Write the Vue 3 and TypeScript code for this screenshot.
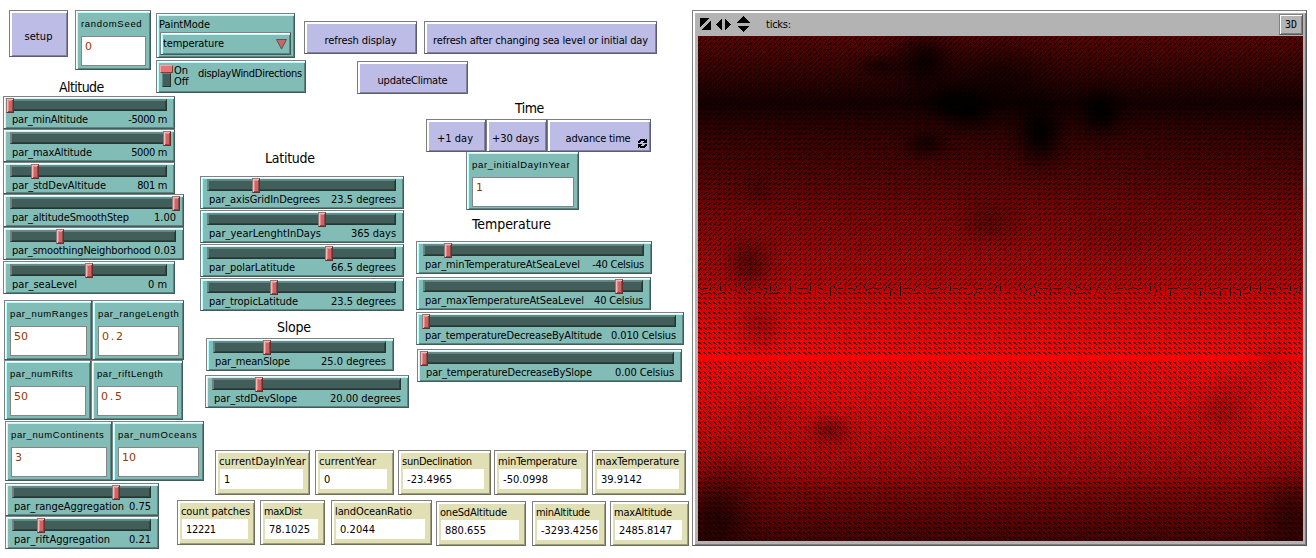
<script setup lang="ts">
import { onMounted, ref } from 'vue'

interface Slider { name: string; value: string; w: number; thumb: number; lw: number; vw: number; cls?: string }
interface Field { name: string; value: string; w: number; lw: number; vw: number }
interface Monitor { name: string; value: string; w: number; gap: number; lw: number; vw: number; low?: boolean }

// Spreads or tightens a text run so that it takes the given width.
const vFit = {
  mounted(el: HTMLElement, binding: { value: number }) {
    const n = (el.textContent ?? '').trim().length
    const natural = el.getBoundingClientRect().width
    if (n > 1) el.style.letterSpacing = `${((binding.value - natural) / (n - 0.5)).toFixed(3)}px`
  },
}

const altitude: Slider[] = [
  { name: 'par_minAltitude', value: '-5000 m', w: 172, thumb: 2, lw: 76, vw: 39 },
  { name: 'par_maxAltitude', value: '5000 m', w: 172, thumb: 159, lw: 80, vw: 36 },
  { name: 'par_stdDevAltitude', value: '801 m', w: 172, thumb: 27, lw: 94, vw: 30, cls: 'tight' },
  { name: 'par_altitudeSmoothStep', value: '1.00', w: 181, thumb: 168, lw: 117, vw: 22 },
  { name: 'par_smoothingNeighborhood', value: '0.03', w: 181, thumb: 52, lw: 139, vw: 22, cls: 'loose' },
  { name: 'par_seaLevel', value: '0 m', w: 172, thumb: 81, lw: 65, vw: 19 },
]
const latitude: Slider[] = [
  { name: 'par_axisGridInDegrees', value: '23.5 degrees', w: 204, thumb: 51, lw: 111, vw: 65 },
  { name: 'par_yearLenghtInDays', value: '365 days', w: 204, thumb: 117, lw: 112, vw: 45 },
  { name: 'par_polarLatitude', value: '66.5 degrees', w: 204, thumb: 124, lw: 86, vw: 65 },
  { name: 'par_tropicLatitude', value: '23.5 degrees', w: 204, thumb: 69, lw: 89, vw: 65 },
]
const slope: Slider[] = [
  { name: 'par_meanSlope', value: '25.0 degrees', w: 188, thumb: 56, lw: 75, vw: 65, cls: 'mean' },
  { name: 'par_stdDevSlope', value: '20.00 degrees', w: 204, thumb: 49, lw: 83, vw: 71, cls: 'dev' },
]
const temperature: Slider[] = [
  { name: 'par_minTemperatureAtSeaLevel', value: '-40 Celsius', w: 236, thumb: 27, lw: 155, vw: 52, cls: 't1' },
  { name: 'par_maxTemperatureAtSeaLevel', value: '40 Celsius', w: 235, thumb: 198, lw: 159, vw: 49, cls: 't2' },
  { name: 'par_temperatureDecreaseByAltitude', value: '0.010 Celsius', w: 268, thumb: 5, lw: 177, vw: 65, cls: 't3' },
  { name: 'par_temperatureDecreaseBySlope', value: '0.00 Celsius', w: 265, thumb: 2, lw: 166, vw: 59, cls: 't4' },
]
const aggregation: Slider[] = [
  { name: 'par_rangeAggregation', value: '0.75', w: 154, thumb: 106, lw: 110, vw: 22 },
  { name: 'par_riftAggregation', value: '0.21', w: 154, thumb: 31, lw: 96, vw: 22 },
]
const fieldRows: Field[][] = [
  [
    { name: 'par_numRanges', value: '50', w: 88, lw: 78, vw: 14 },
    { name: 'par_rangeLength', value: '0.2', w: 92, lw: 81, vw: 22 },
  ],
  [
    { name: 'par_numRifts', value: '50', w: 87, lw: 63, vw: 14 },
    { name: 'par_riftLength', value: '0.5', w: 92, lw: 66, vw: 22 },
  ],
  [
    { name: 'par_numContinents', value: '3', w: 107, lw: 93, vw: 7 },
    { name: 'par_numOceans', value: '10', w: 92, lw: 79, vw: 14 },
  ],
]
const monitorsTop: Monitor[] = [
  { name: 'currentDayInYear', value: '1', w: 95, gap: 38, lw: 87, vw: 6 },
  { name: 'currentYear', value: '0', w: 79, gap: 5, lw: 57, vw: 6 },
  { name: 'sunDeclination', value: '-23.4965', w: 93, gap: 4, lw: 70, vw: 45 },
  { name: 'minTemperature', value: '-50.0998', w: 94, gap: 3, lw: 79, vw: 45 },
  { name: 'maxTemperature', value: '39.9142', w: 94, gap: 4, lw: 83, vw: 41 },
]
const monitorsBottom: Monitor[] = [
  { name: 'count patches', value: '12221', w: 78, gap: 0, lw: 69, vw: 30 },
  { name: 'maxDist', value: '78.1025', w: 65, gap: 5, lw: 38, vw: 41 },
  { name: 'landOceanRatio', value: '0.2044', w: 101, gap: 6, lw: 77, vw: 35 },
  { name: 'oneSdAltitude', value: '880.655', w: 90, gap: 4, lw: 67, vw: 41, low: true },
  { name: 'minAltitude', value: '-3293.4256', w: 74, gap: 6, lw: 54, vw: 57, low: true },
  { name: 'maxAltitude', value: '2485.8147', w: 79, gap: 4, lw: 58, vw: 53, low: true },
]

const world = ref<HTMLCanvasElement | null>(null)
const COLS = 121
const ROWS = 101
const P = 5

// Red level by height in the world, in pixels from its top.
const levels: [number, number][] = [
  [0, 92], [25, 68], [50, 42], [68, 22], [74, 30], [100, 56], [140, 84], [164, 110],
  [185, 132], [220, 162], [252, 190], [260, 208], [290, 230], [316, 255], [324, 255],
  [360, 236], [395, 208], [425, 178], [440, 160], [455, 128], [480, 98], [505, 70],
]
// Cold spots: centre, radii, strength.
const spots: number[][] = [
  [226, 26, 32, 30, 0.75], [252, 66, 26, 16, 0.8], [270, 72, 26, 20, 0.92], [182, 30, 22, 12, 0.5],
  [228, 108, 22, 14, 0.6], [342, 96, 24, 34, 0.92], [402, 76, 22, 24, 0.95], [300, 44, 60, 42, 0.5],
  [59, 154, 14, 14, 0.22], [52, 228, 24, 26, 0.42], [62, 290, 22, 26, 0.24], [292, 186, 30, 22, 0.25],
  [132, 394, 20, 14, 0.35], [66, 374, 30, 28, 0.12], [18, 482, 36, 44, 0.55], [524, 374, 26, 22, 0.2],
  [576, 324, 26, 20, 0.15], [546, 350, 34, 20, 0.1], [592, 476, 34, 42, 0.42], [420, 200, 50, 30, 0.1],
  [40, 440, 40, 30, 0.15],
]

function levelAt(y: number): number {
  for (let i = 1; i < levels.length; i++) {
    const [y0, v0] = levels[i - 1]
    const [y1, v1] = levels[i]
    if (y <= y1) return v0 + ((v1 - v0) * (y - y0)) / (y1 - y0)
  }
  return levels[levels.length - 1][1]
}

onMounted(() => {
  const ctx = world.value?.getContext('2d')
  if (!ctx) return
  let seed = 7
  const rnd = () => (seed = (seed * 16807) % 2147483647) / 2147483647
  for (let r = 0; r < ROWS; r++) {
    for (let c = 0; c < COLS; c++) {
      const x = c * P + 2.5
      const y = r * P + 2.5
      let v = levelAt(y)
      for (const [cx, cy, rx, ry, s] of spots) {
        const d = ((x - cx) / rx) ** 2 + ((y - cy) / ry) ** 2
        v *= 1 - s * Math.exp(-d * 1.4)
      }
      v *= 0.97 + 0.05 * rnd()
      ctx.fillStyle = `rgb(${Math.min(255, Math.round(v))},0,0)`
      ctx.fillRect(c * P, r * P, P, P)
    }
  }
  // Each mark is a list of pixels: x, y, opacity.
  const steep = [[0, 4, 1], [1, 3, 1], [2, 2, 1], [3, 1, 1], [2, 3, 0.5]]
  const flat = [[0, 3, 1], [1, 3, 0.8], [1, 2, 0.5], [2, 2, 1], [3, 1, 1]]
  ctx.fillStyle = '#000'
  for (let r = 0; r < ROWS; r++) {
    if (r === 64) continue
    for (let c = 0; c < COLS; c++) {
      ctx.globalAlpha = 1
      if (r === 50 || (r === 51 && rnd() < 0.3)) {
        const a = rnd() * Math.PI
        for (let k = -2; k <= 2; k++) {
          ctx.fillRect(c * P + Math.round(2 + Math.cos(a) * k), r * P + Math.round(2 + Math.sin(a) * k), 1, 1)
        }
        continue
      }
      const shape = r < 14 || (r >= 36 && r < 50) || (r > 64 && r < 88) ? steep : flat
      const mirrored = r >= 51
      for (const [px, py, alpha] of shape) {
        ctx.globalAlpha = alpha
        ctx.fillRect(c * P + px, r * P + (mirrored ? 4 - py : py), 1, 1)
      }
    }
  }
})
</script>

<template>
  <div class="page">
    <main class="controls">
      <section class="top">
        <button class="btn setup"><span v-fit="28">setup</span></button>
        <div class="field teal seed">
          <label v-fit="61">randomSeed</label>
          <div class="entry">0</div>
        </div>
        <div class="modes">
          <div class="chooser teal">
            <span v-fit="51">PaintMode</span>
            <div class="choice teal">
              <span v-fit="61">temperature</span>
              <svg width="11" height="11" viewBox="0 0 11 11">
                <path d="M0.5 0.5H10.5L5.5 10Z" fill="#cc6666" stroke="#555" stroke-width="1" />
              </svg>
            </div>
          </div>
          <div class="switch teal">
            <div class="lever"><i class="knob"></i><i class="slot"></i></div>
            <div class="states"><span>On</span><span>Off</span></div>
            <span v-fit="104" class="switch-name">displayWindDirections</span>
          </div>
        </div>
        <div class="actions">
          <div class="action-row">
            <button class="btn refresh"><span v-fit="72">refresh display</span></button>
            <button class="btn refresh-all"><span v-fit="215">refresh after changing sea level or initial day</span></button>
          </div>
          <button class="btn update"><span v-fit="70">updateClimate</span></button>
        </div>
      </section>

      <div class="body">
        <section class="left">
          <h2 class="h-alt"><span v-fit="45">Altitude</span></h2>
          <div v-for="s in altitude" :key="s.name" class="slider teal" :class="s.cls" :style="{ width: s.w + 'px' }">
            <div class="track"></div>
            <i class="thumb" :style="{ left: s.thumb + 'px' }"></i>
            <div class="caption"><span v-fit="s.lw">{{ s.name }}</span><span v-fit="s.vw">{{ s.value }}</span></div>
          </div>
          <div class="fields">
            <div v-for="(row, i) in fieldRows" :key="i" class="field-row" :class="'fr' + i">
              <div v-for="f in row" :key="f.name" class="field teal" :style="{ width: f.w + 'px' }">
                <label v-fit="f.lw">{{ f.name }}</label>
                <div class="entry"><span v-fit="f.vw">{{ f.value }}</span></div>
              </div>
            </div>
          </div>
          <div class="aggregation">
            <div v-for="s in aggregation" :key="s.name" class="slider teal" :style="{ width: s.w + 'px' }">
              <div class="track"></div>
              <i class="thumb" :style="{ left: s.thumb + 'px' }"></i>
              <div class="caption"><span v-fit="s.lw">{{ s.name }}</span><span v-fit="s.vw">{{ s.value }}</span></div>
            </div>
          </div>
        </section>

        <div class="right">
          <div class="middle">
            <section class="lat">
              <h2 class="h-lat"><span v-fit="50">Latitude</span></h2>
              <div class="lat-list">
                <div v-for="s in latitude" :key="s.name" class="slider teal" :style="{ width: s.w + 'px' }">
                  <div class="track"></div>
                  <i class="thumb" :style="{ left: s.thumb + 'px' }"></i>
                  <div class="caption"><span v-fit="s.lw">{{ s.name }}</span><span v-fit="s.vw">{{ s.value }}</span></div>
                </div>
              </div>
              <h2 class="h-slope"><span v-fit="34">Slope</span></h2>
              <div v-for="s in slope" :key="s.name" class="slider teal" :class="s.cls" :style="{ width: s.w + 'px' }">
                <div class="track"></div>
                <i class="thumb" :style="{ left: s.thumb + 'px' }"></i>
                <div class="caption"><span v-fit="s.lw">{{ s.name }}</span><span v-fit="s.vw">{{ s.value }}</span></div>
              </div>
            </section>
            <section class="time">
              <h2 class="h-time"><span v-fit="29">Time</span></h2>
              <div class="steps">
                <button class="btn day"><span v-fit="36">+1 day</span></button>
                <button class="btn days"><span v-fit="47">+30 days</span></button>
                <button class="btn advance">
                  <span v-fit="65">advance time</span>
                  <svg class="loop" width="9" height="9" viewBox="0 0 9 9" fill="#000">
                    <path d="M1 1H2V0H7V1H8V0H9V4H5V3H6V2H3V3H2V4H0V2H1Z" />
                    <path d="M8 8H7V9H2V8H1V9H0V5H4V6H3V7H6V6H7V5H9V7H8Z" />
                  </svg>
                </button>
              </div>
              <div class="field teal initial">
                <label v-fit="98">par_initialDayInYear</label>
                <div class="entry">1</div>
              </div>
              <h2 class="h-temp"><span v-fit="79">Temperature</span></h2>
              <div v-for="s in temperature" :key="s.name" class="slider teal" :class="s.cls" :style="{ width: s.w + 'px' }">
                <div class="track"></div>
                <i class="thumb" :style="{ left: s.thumb + 'px' }"></i>
                <div class="caption"><span v-fit="s.lw">{{ s.name }}</span><span v-fit="s.vw">{{ s.value }}</span></div>
              </div>
            </section>
          </div>
          <section class="monitors">
            <div class="monitor-row">
              <div v-for="m in monitorsTop" :key="m.name" class="monitor" :style="{ width: m.w + 'px', marginLeft: m.gap + 'px' }">
                <span v-fit="m.lw">{{ m.name }}</span>
                <div class="reading"><span v-fit="m.vw">{{ m.value }}</span></div>
              </div>
            </div>
            <div class="monitor-row">
              <div v-for="m in monitorsBottom" :key="m.name" class="monitor" :class="{ low: m.low }" :style="{ width: m.w + 'px', marginLeft: m.gap + 'px' }">
                <span v-fit="m.lw">{{ m.name }}</span>
                <div class="reading"><span v-fit="m.vw">{{ m.value }}</span></div>
              </div>
            </div>
          </section>
        </div>
      </div>
    </main>

    <section class="view">
      <header class="view-bar">
        <svg width="52" height="17" viewBox="0 0 52 17" shape-rendering="crispEdges">
          <path d="M1 2H10L1 11ZM12 4V14H2Z" fill="#000" />
          <path d="M23 2V15L17 8.5ZM26 2V15L32 8.5Z" fill="#000" />
          <path d="M38 7L44.500 0L51 7ZM38 9.500H51L44.500 16Z" fill="#000" />
        </svg>
        <span v-fit="25" class="ticks">ticks:</span>
        <button class="three">3D</button>
      </header>
      <canvas ref="world" class="world" width="605" height="505"></canvas>
    </section>
  </div>
</template>

<style>
body { background: #fff; }
</style>

<style scoped>
.page {
  display: flex;
  width: 1316px;
  height: 558px;
  overflow: hidden;
  background: #fff;
  color: #000;
  font: 11px/14px "DejaVu Sans Condensed", "DejaVu Sans", sans-serif;
  font-stretch: condensed;
}
.page * { box-sizing: border-box; }
span, label { display: inline-block; white-space: nowrap; }
h2 { margin: 0; font-size: 14px; line-height: 16px; font-weight: 400; }
h2 span { display: block; width: max-content; }
.controls { flex: none; width: 692px; height: 558px; }

.teal {
  background: #82bcb6;
  border: 1px solid #808080;
  border-right-color: #405c59;
  border-bottom-color: #405c59;
  box-shadow: inset 1px 1px #fff, inset 2px 2px #b4ffff, inset -1px -1px #5b837f;
}
.btn {
  display: flex;
  align-items: center;
  justify-content: center;
  flex: none;
  height: 33px;
  margin: 0;
  padding: 0;
  border: 1px solid #7d7d84;
  border-right-color: #5c5c72;
  border-bottom-color: #5c5c72;
  border-radius: 0;
  background: #bcbce6;
  box-shadow: inset 2px 2px #fff, inset -1px -1px #8484a2;
  color: #000;
  font: inherit;
}
.btn > span { padding-top: 6px; }

.top { display: flex; align-items: flex-start; height: 79px; padding: 10px 0 0 9px; }
.setup { width: 59px; height: 47px; }
.seed { flex: none; width: 76px; margin-left: 7px; }
.modes { flex: none; width: 150px; margin: 3px 0 0 5px; }
.chooser { width: 139px; height: 45px; padding: 4px 3px 0 2px; }
.chooser > span { display: block; width: max-content; }
.choice { display: flex; align-items: center; justify-content: space-between; height: 23px; margin: 0 0 0 1px; padding: 0 3px 0 2px; }
.choice svg { margin-top: 1px; }
.switch { display: flex; height: 33px; margin-top: 2px; padding: 3px 0 0 3px; }
.lever { display: flex; flex-direction: column; align-items: center; width: 13px; padding-top: 1px; }
.knob { width: 13px; height: 8px; background: #e67676; border: 1px solid #ffa5a5; border-right-color: #803e3e; border-bottom-color: #803e3e; }
.slot { width: 9px; height: 14px; background: #425e5b; border: 1px solid #5c8783; border-right-color: #253534; border-bottom-color: #253534; }
.states { display: flex; flex-direction: column; width: 25px; padding-left: 1px; line-height: 11px; }
.states span { height: 11px; line-height: 13px; }
.switch-name { padding-top: 3px; }
.actions { flex: none; margin: 11px 0 0 -2px; }
.action-row { display: flex; gap: 7px; }
.refresh { width: 113px; }
.refresh-all { width: 233px; }
.update { width: 111px; margin: 7px 0 0 53px; }

.body { display: flex; }
.left { flex: none; width: 177px; height: 479px; padding-left: 3px; }
.h-alt { height: 17px; padding-left: 56px; }

.slider { position: relative; height: 33px; padding: 2px 7px 0 6px; }
.track {
  height: 12px;
  background: #425e5b;
  border: 1px solid #7d8281;
  border-right-color: #253534;
  border-bottom-color: #253534;
  box-shadow: inset 1px 1px #5c8783, inset -1px -1px #30443f;
}
.thumb {
  position: absolute;
  top: 1px;
  width: 8px;
  height: 15px;
  background: #cc6666;
  border: 1px solid #858080;
  border-right-color: #652f2f;
  border-bottom-color: #652f2f;
  box-shadow: inset 1px 1px #ffb4b4, inset -1px -1px #8e4747, inset 2px 2px #e88;
}
.caption { display: flex; justify-content: space-between; padding: 2px 0 0 2px; }
.tight { height: 32px; }
.loose { margin-bottom: 1px; }

.fields { padding: 6px 0 0 1px; }
.field-row { display: flex; height: 60px; }
.fr2 { margin: 1px 0 0 1px; }
.field { flex: none; height: 60px; padding: 6px 4px 0 5px; }
.field label {
  display: block;
  width: max-content;
  height: 19px;
  font: 9.5px/14px "Liberation Sans", Arial, sans-serif;
  font-weight: 400;
}
.entry {
  height: 30px;
  padding: 2px 0 0 3px;
  border: 1px solid #858585;
  background: #fff;
  color: #963700;
  font: 11px/15px "DejaVu Sans", sans-serif;
}
.aggregation { padding: 2px 0 0 2px; }

.right { flex: none; width: 512px; }
.middle { display: flex; height: 371px; }
.lat { width: 239px; padding-left: 23px; padding-top: 71px; }
.h-lat { height: 26px; padding-left: 65px; }
.lat-list { display: flex; flex-direction: column; gap: 1px; }
.h-slope { height: 27px; padding: 8px 0 0 77px; }
.mean { margin-left: 6px; }
.dev { margin: 4px 0 0 5px; }
.time { width: 273px; padding-top: 21px; }
.h-time { height: 19px; padding-left: 99px; }
.steps { display: flex; padding-left: 10px; height: 32px; }
.day { width: 60px; padding-right: 2px; }
.days { width: 61px; padding-right: 2px; }
.advance { position: relative; width: 104px; padding-right: 2px; }
.loop { position: absolute; right: 3px; bottom: 3px; }
.initial { width: 113px; height: 59px; margin-left: 50px; }
.h-temp { height: 31px; padding: 6px 0 0 56px; }
.t2 { margin-top: 3px; }
.t3 { margin-top: 2px; }
.t4 { margin: 4px 0 0 1px; }

.monitor-row { display: flex; height: 50px; }
.monitor {
  flex: none;
  height: 45px;
  padding: 4px 6px 0 3px;
  border: 1px solid #808080;
  border-right-color: #6e6e59;
  border-bottom-color: #6e6e59;
  background: #e0e0b4;
  box-shadow: inset 2px 2px #fff, inset -1px -1px #9c9c7e;
}
.monitor > span { display: block; width: max-content; height: 14px; }
.reading { height: 20px; margin-left: 1px; padding: 4px 0 0 4px; background: #fff; }
.low { margin-top: 1px; }

.view {
  flex: none;
  width: 615px;
  height: 536px;
  margin-top: 10px;
  padding: 2px 3px 0 5px;
  border: 1px solid #808080;
  border-right-color: #585858;
  border-bottom-color: #585858;
  background: #b3b3b3;
  box-shadow: inset 2px 2px #fff, inset -1px -1px #7d7d7d;
}
.view-bar { display: flex; height: 23px; padding: 3px 0 0 1px; }
.ticks { margin-left: 15px; padding-top: 2px; }
.three {
  width: 24px;
  height: 21px;
  margin: -2px 0 0 auto;
  padding: 1px 0 0;
  border: 1px solid #808080;
  border-right-color: #585858;
  border-bottom-color: #585858;
  border-radius: 0;
  background: #b3b3b3;
  box-shadow: inset 1px 1px #fff, inset -1px -1px #7d7d7d;
  color: #000;
  font: 10px/16px "DejaVu Sans Mono", monospace;
}
.world { display: block; width: 605px; height: 505px; }
</style>
